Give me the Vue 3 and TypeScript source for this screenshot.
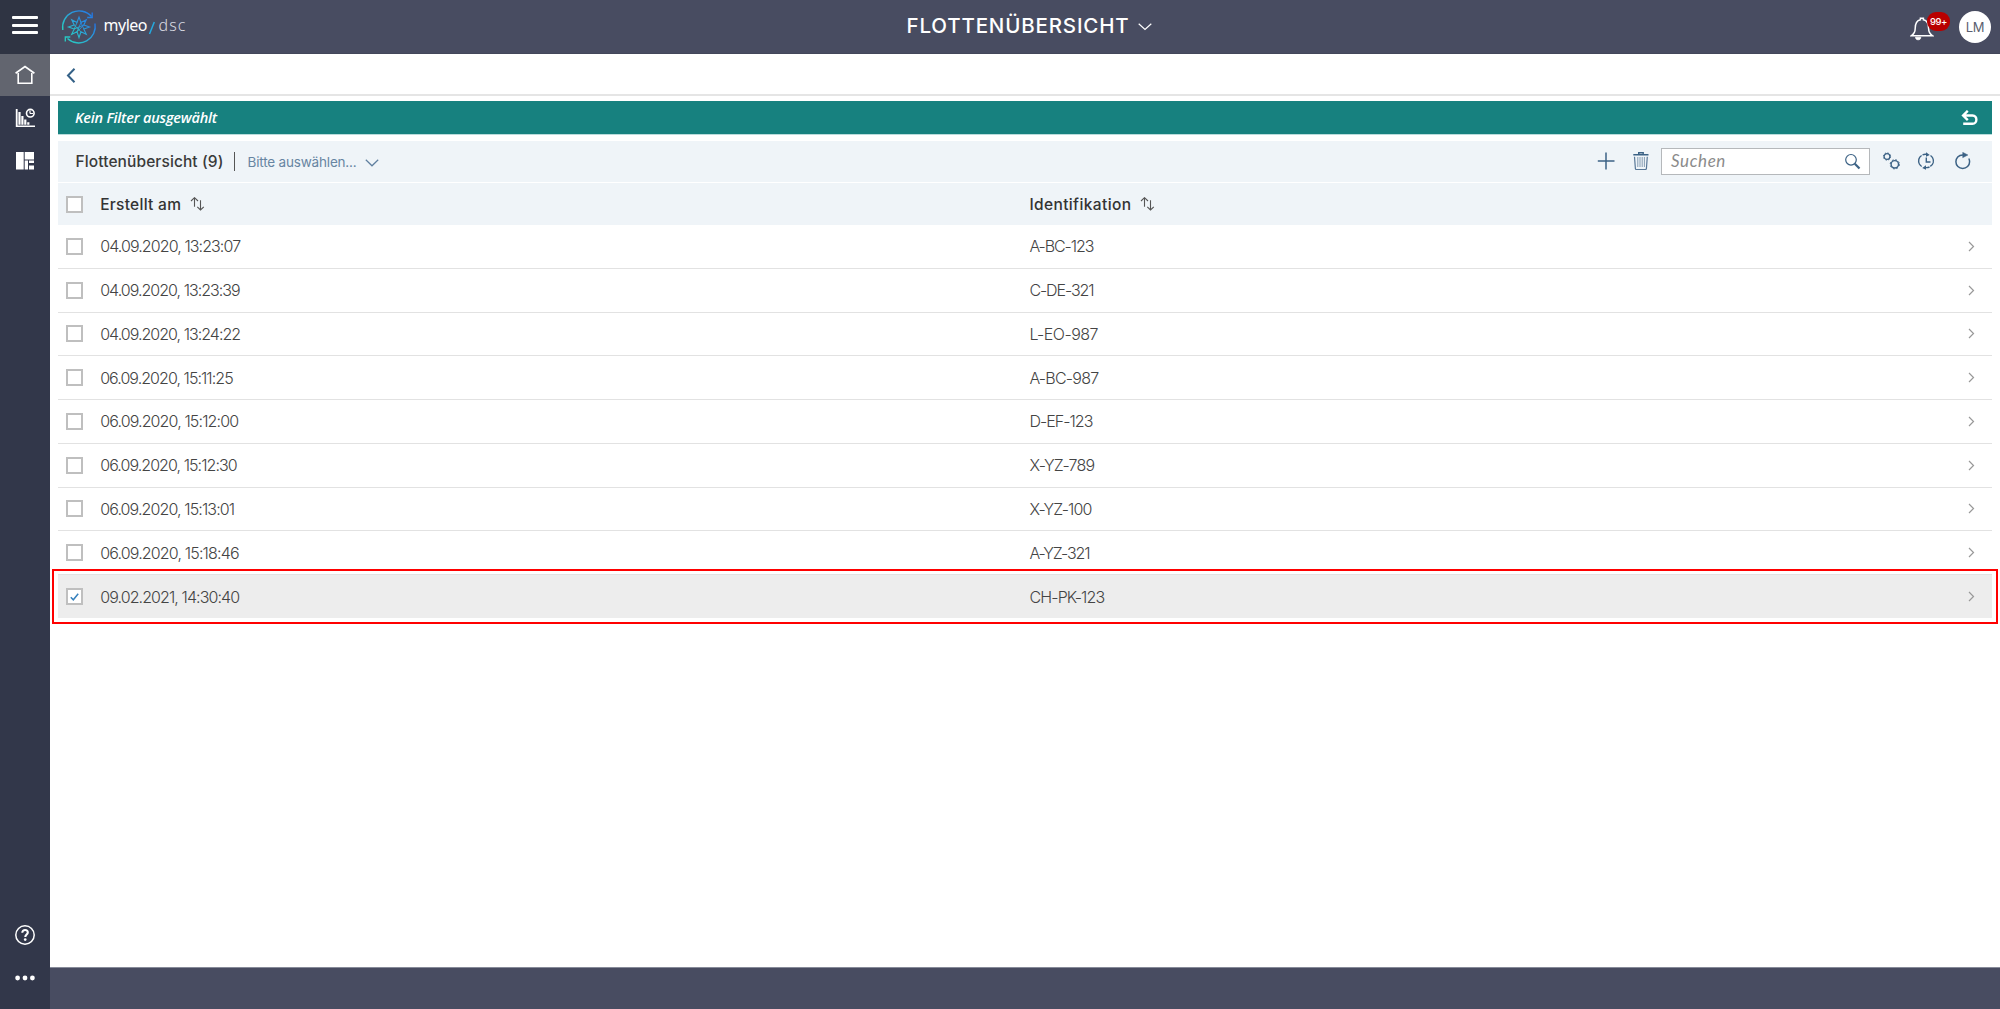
<script setup lang="ts">
import { ref, type Directive } from 'vue'

interface Vehicle {
  created: string
  createdWidth: number
  ident: string
  identWidth: number
  selected: boolean
}

const rows = ref<Vehicle[]>([
  { created: '04.09.2020, 13:23:07', createdWidth: 140, ident: 'A-BC-123', identWidth: 64, selected: false },
  { created: '04.09.2020, 13:23:39', createdWidth: 139.5, ident: 'C-DE-321', identWidth: 64, selected: false },
  { created: '04.09.2020, 13:24:22', createdWidth: 140, ident: 'L-EO-987', identWidth: 68, selected: false },
  { created: '06.09.2020, 15:11:25', createdWidth: 132.5, ident: 'A-BC-987', identWidth: 69, selected: false },
  { created: '06.09.2020, 15:12:00', createdWidth: 138, ident: 'D-EF-123', identWidth: 63, selected: false },
  { created: '06.09.2020, 15:12:30', createdWidth: 136.5, ident: 'X-YZ-789', identWidth: 65, selected: false },
  { created: '06.09.2020, 15:13:01', createdWidth: 134, ident: 'X-YZ-100', identWidth: 62, selected: false },
  { created: '06.09.2020, 15:18:46', createdWidth: 138.5, ident: 'A-YZ-321', identWidth: 60, selected: false },
  { created: '09.02.2021, 14:30:40', createdWidth: 139, ident: 'CH-PK-123', identWidth: 75, selected: true },
])

// Tracks a label so that it takes the given width in pixels.
const vFit: Directive<HTMLElement, number> = {
  mounted(el, binding) {
    const count = (el.textContent ?? '').length
    const spacing = (binding.value - el.getBoundingClientRect().width) / Math.max(1, count)
    el.style.letterSpacing = `${spacing}px`
  },
}
</script>

<template>
  <div class="app">
    <nav class="side">
      <button class="burger" aria-label="Menu"><i></i><i></i><i></i></button>
      <div class="nav-item active">
        <svg width="20" height="20" viewBox="0 0 20 20" fill="none" stroke="#fff">
          <path d="M.6 8.3 10 1.6l9.400 6.700" stroke-width="1.7" />
          <path d="M3.200 8v10.200h13.600V8" stroke-width="1.600" />
        </svg>
      </div>
      <div class="nav-item chart">
        <svg width="20" height="20" viewBox="0 0 20 20" fill="#fff">
          <path d="M.8 1h1.800v17.200H.8zM3.400 4h2.200v12.800H3.400zM6.300 8h2.200v8.800H6.300zM9.200 11.500h2.200v5.300H9.200zM12.200 14.300h2.200v2.500h-2.200zM.8 17.500H20v1.400H.8z" />
          <circle cx="15.300" cy="5.200" r="3.800" fill="none" stroke="#fff" stroke-width="1.600" />
          <path d="M15 5.500V2.500M15 5.500h3" stroke="#fff" stroke-width="1.200" />
        </svg>
      </div>
      <div class="nav-item tiles">
        <svg width="18" height="18" viewBox="0 0 18 18" fill="#fff">
          <path d="M0 0h7.700v17.500H0zM8.700 0H18v7.500H8.700zM8.700 8.500h3.300v9H8.700zM13 8.500h5v2.500h-5zM13 13.500h5v4h-5z" />
        </svg>
      </div>
      <div class="side-bottom">
        <svg class="help" width="22" height="22" viewBox="0 0 22 22">
          <circle cx="11" cy="11" r="9.200" fill="none" stroke="#fff" stroke-width="1.500" />
          <path d="M8.300 8.700C8.300 6.900 9.500 6 11 6s2.800.9 2.800 2.500c0 2-2.500 2.200-2.500 4.500" fill="none" stroke="#fff" stroke-width="2.100" />
          <circle cx="11.200" cy="15.600" r="1.350" fill="#fff" />
        </svg>
        <svg width="22" height="6" viewBox="0 0 22 6" fill="#fff">
          <circle cx="3.600" cy="3" r="2.400" /><circle cx="11" cy="3" r="2.400" /><circle cx="18.400" cy="3" r="2.400" />
        </svg>
      </div>
    </nav>

    <div class="main">
      <header class="top">
        <div class="brand">
          <svg width="36" height="36" viewBox="0 0 36 36" fill="none">
            <defs>
              <linearGradient id="brandTone" x1="0" y1="1" x2="1" y2="0">
                <stop offset="0" stop-color="#27d0c0" /><stop offset=".5" stop-color="#2ba5d8" /><stop offset="1" stop-color="#2374e6" />
              </linearGradient>
            </defs>
            <g stroke="url(#brandTone)">
              <path d="M1.800 21A16.500 16.500 0 0 1 30.500 7.500" stroke-width="1.400" />
              <path d="M34 14.500A16.500 16.500 0 0 1 6.500 29.500" stroke-width="1.400" />
              <path d="M31.200 3.500v5h-5M4.300 32.500v-4.500h5" stroke-width="1.300" />
              <path d="m18 8 2 5.500 5.300-2.800-2.500 5.300L28.500 18l-5.700 2 2.500 5.300-5.300-2.500L18 28.500l-2-5.700-5.300 2.500 2.500-5.300-5.700-2 5.700-2-2.500-5.300 5.300 2.800z" stroke-width="1.100" />
              <path d="m13.200 16 6.800 6.800M16 13.500l-2.800 6.500 9.600-4M16 22.800l4-9.300 2.800 6.500M22.800 16 16 22.800" stroke-width=".9" />
            </g>
          </svg>
          <span v-fit="43.500" class="brand-name">myleo</span>
          <svg class="slash" width="8" height="14" viewBox="0 0 8 14"><path d="M1.500 13 6.300 1" stroke="#25a9e0" stroke-width="1.500" /></svg>
          <span v-fit="28" class="brand-sub">dsc</span>
        </div>
        <div class="title">
          <span v-fit="223">FLOTTENÜBERSICHT</span>
          <svg width="14" height="8" viewBox="0 0 14 8"><path d="m.7.800 6.300 5.700L13.300.800" fill="none" stroke="#fff" stroke-width="1.200" /></svg>
        </div>
        <div class="user">
          <div class="bell">
            <svg width="24" height="25" viewBox="0 0 24 25" fill="none" stroke="#fff">
              <path d="M1.200 19.800C4 18 5.200 16 5.200 12.500c0-5 1.800-8 5.200-8.700V2.200h3v1.600c3.400.7 5.200 3.700 5.200 8.700 0 3.500 1.200 5.500 4 7.300z" stroke-width="1.500" />
              <path d="M5.500 21.200h5.300c0 1.600-.9 2.600-2.600 2.600s-2.700-1-2.700-2.600z" fill="#fff" stroke-width=".7" />
            </svg>
            <span class="badge"><span v-fit="17">99+</span></span>
          </div>
          <div class="avatar"><span v-fit="18.500">LM</span></div>
        </div>
      </header>

      <div class="backbar">
        <svg width="10" height="15" viewBox="0 0 10 15"><path d="M8.500.8 2 7.500l6.500 6.700" fill="none" stroke="#346187" stroke-width="2" /></svg>
      </div>

      <main class="content">
        <div class="filter">
          <span v-fit="142">Kein Filter ausgewählt</span>
          <svg width="17" height="16" viewBox="0 0 17 16" fill="none" stroke="#fff" stroke-width="2.400">
            <path d="M6.800.8 2.100 5.500l4.700 4.700M2 5.500h9.500c5.300 0 5 8.300 0 8.300H2.200" />
          </svg>
        </div>

        <div class="toolbar">
          <span v-fit="148" class="list-title">Flottenübersicht (9)</span>
          <i class="divider"></i>
          <span v-fit="109" class="variant">Bitte auswählen...</span>
          <svg class="variant-arrow" width="14" height="8" viewBox="0 0 14 8"><path d="m.8.8 6.200 6 6.200-6" fill="none" stroke="#5f7f9f" stroke-width="1.200" /></svg>
          <div class="actions">
            <svg class="plus" width="18" height="18" viewBox="0 0 18 18"><path d="M9 .5v17M.8 9h16.700" stroke="#3c6285" stroke-width="1.500" /></svg>
            <svg class="trash" width="18" height="18" viewBox="0 0 18 18" fill="none" stroke="#587797">
              <path d="M1.300 2.800h15.200M6.700 2.300V.8h4.500v1.500" stroke="#3c6285" stroke-width="1.400" />
              <path d="m2.500 4.700.9 12c.1.500.4.800.9.800h9.200c.5 0 .8-.3.900-.8l.9-12" stroke-width="1.200" />
              <path d="M5.800 5v10M8 5v10M10.200 5v10M12.400 5v10" stroke-width=".7" />
            </svg>
            <div class="search">
              <span v-fit="55">Suchen</span>
              <svg width="17" height="17" viewBox="0 0 17 17" fill="none" stroke="#3c6285">
                <circle cx="7" cy="6.800" r="5.300" stroke-width="1.200" /><path d="m10.800 10.700 4.700 4.800" stroke-width="2.200" />
              </svg>
            </div>
            <svg class="gears" width="18" height="18" viewBox="0 0 18 18" fill="none" stroke="#3c6285">
              <circle cx="5" cy="4.500" r="2.900" stroke-width="1.300" /><circle cx="5" cy="4.500" r="3.600" stroke-width="1" stroke-dasharray="1.400 1.430" />
              <circle cx="12.800" cy="12.300" r="3.700" stroke-width="1.400" /><circle cx="12.800" cy="12.300" r="4.600" stroke-width="1" stroke-dasharray="1.800 1.810" />
            </svg>
            <svg class="clock" width="18" height="18" viewBox="0 0 18 18" fill="none" stroke="#3c6285">
              <path d="M4.600 3.500C1.600 5.200.9 9 2.400 12c.6 1.100 1.300 1.900 2.300 2.500M13.300 14.400c3.100-2 3.800-5.600 2.400-8.400-.6-1.200-1.300-1.900-2.200-2.500M9.300 5.500V10h4.200M5.500 3c1.300-.7 2.500-.8 4-.6M12.500 15c-1.300.6-2.500.8-4 .6" stroke-width="1.400" />
              <path d="M9 .3v4.400l3.800-1.800zM9 13.300v4.400l-3.800-1.800z" fill="#3c6285" stroke="none" />
            </svg>
            <svg class="refresh" width="18" height="18" viewBox="0 0 18 18" fill="none" stroke="#3c6285">
              <path d="M10.500 3H8.700C4.500 3 1.900 6.200 1.900 9.700c0 3.800 3 6.700 6.800 6.700s6.900-2.900 6.900-6.700c0-1.200-.3-2.300-.8-3.200" stroke-width="1.500" />
              <path d="M8.700.3v5.400L14 3z" fill="#3c6285" stroke-width=".4" />
            </svg>
          </div>
        </div>

        <div class="row head">
          <i class="box"></i>
          <div class="cell first">
            <span v-fit="81">Erstellt am</span>
            <svg width="15" height="14" viewBox="0 0 15 14" fill="none" stroke="#555" stroke-width="1.100"><path d="M4.500 9.800V.8M1 4 4.500.7 8 4M10.500 3.200v9.700M7.300 9.800l3.200 3.200 3.300-3.200" /></svg>
          </div>
          <div class="cell">
            <span v-fit="102">Identifikation</span>
            <svg width="15" height="14" viewBox="0 0 15 14" fill="none" stroke="#555" stroke-width="1.100"><path d="M4.500 9.800V.8M1 4 4.500.7 8 4M10.500 3.200v9.700M7.300 9.800l3.200 3.200 3.300-3.200" /></svg>
          </div>
        </div>

        <div v-for="row in rows" :key="row.created" class="row item" :class="{ selected: row.selected }">
          <i class="box">
            <svg v-if="row.selected" width="9" height="8" viewBox="0 0 9 8"><path d="m.8 4.200 2.500 2.600L8.200.8" fill="none" stroke="#3681bd" stroke-width="1.500" /></svg>
          </i>
          <div class="cell first"><span v-fit="row.createdWidth">{{ row.created }}</span></div>
          <div class="cell"><span v-fit="row.identWidth">{{ row.ident }}</span></div>
          <svg class="go" width="7" height="11" viewBox="0 0 7 11"><path d="m1 1 4.500 4.500L1 10" fill="none" stroke="#999" stroke-width="1.200" /></svg>
        </div>
      </main>
      <footer class="bottom"></footer>
    </div>
  </div>
</template>

<style>
body { margin: 0; background: #fff; }
</style>

<style scoped>
.app { display: flex; width: 2000px; height: 1009px; overflow: hidden; font-family: Inter, "Open Sans", sans-serif; color: #3a3a3a; }
.app * { box-sizing: border-box; }
svg { display: block; flex: none; }
span { white-space: nowrap; }
.side { width: 50px; flex: none; display: flex; flex-direction: column; background: #32374a; }
.burger { height: 54px; padding: 16px 12px 0; border: 0; background: #2f3443; display: flex; flex-direction: column; gap: 4.500px; }
.burger i { flex: none; width: 26px; height: 3px; border-radius: 1px; background: #fff; }
.nav-item { height: 42px; display: flex; align-items: center; justify-content: center; }
.nav-item.active { background: #62656f; }
.nav-item.chart { height: 43px; }
.nav-item.tiles { height: 43px; }
.side-bottom { margin-top: auto; display: flex; flex-direction: column; align-items: center; gap: 28.500px; padding-bottom: 28.500px; }
.main { flex: 1; display: flex; flex-direction: column; min-width: 0; }
.top { height: 54px; flex: none; background: #484c61; display: grid; grid-template-columns: 1fr auto 1fr; color: #fff; border-bottom: 1px solid #43475a; }
.brand { display: flex; padding-left: 11px; padding-top: 9px; }
.brand-name, .brand-sub { font: 400 16px/20px "Noto Sans", "Open Sans", sans-serif; margin-left: 6.500px; margin-top: 6px; }
.brand-sub { font-weight: 300; color: #d8dae2; margin-left: 2.500px; }
.slash { margin: 12px 0 0 1px; }
.title { display: flex; font-size: 20.500px; line-height: 24px; font-weight: 500; padding-top: 14px; margin-left: 8px; }
.title svg { margin: 9px 0 0 8px; }
.user { display: flex; justify-content: flex-end; padding-right: 9px; }
.bell { position: relative; width: 24px; margin: 16px 25px 0 0; }
.badge { position: absolute; left: 17px; top: -4px; width: 23px; height: 19px; border-radius: 9px; background: #b90000; font-size: 9.500px; line-height: 19px; font-weight: 500; display: flex; justify-content: center; }
.avatar { width: 32px; height: 32px; margin-top: 11px; border-radius: 50%; background: #fff; color: #5b5f70; font-size: 13px; line-height: 32px; display: flex; justify-content: center; }
.backbar { height: 42px; flex: none; padding: 13.500px 0 0 16px; border-bottom: 2px solid #e5e5e5; }
.content { flex: 1; padding: 5px 8px 0 8px; min-height: 0; }
.filter { height: 34px; background: #17817f; border-bottom: 1px solid #b9dcdb; color: #fff; display: flex; justify-content: space-between; padding: 0 14px 0 17px; font: italic 600 14.500px/34px "Open Sans", sans-serif; }
.filter svg { margin-top: 9px; }
.toolbar { height: 41px; margin-top: 6px; background: #eff4f8; display: flex; align-items: center; padding-left: 17.500px; }
.list-title { font-size: 15.500px; font-weight: 500; }
.divider { width: 1.500px; height: 19px; background: #555; margin: 0 12.500px 0 10px; }
.variant { font-size: 13.500px; color: #6785a2; }
.variant-arrow { margin: 3px 0 0 8.500px; }
.actions { margin-left: auto; display: flex; align-items: center; padding-right: 20.500px; margin-top: -1px; }
.trash { margin: 0 11px 0 17px; }
.search { width: 209px; height: 27px; border: 1px solid #b5b8bb; background: #fff; display: flex; align-items: center; justify-content: space-between; padding: 0 8px 0 9px; font: italic 400 17px/24px Lato, sans-serif; color: #8b8b8b; }
.gears { margin: 0 17px 0 12px; }
.clock { margin-right: 18.500px; }
.row { display: flex; align-items: center; padding: 0 17.500px 0 8.400px; }
.head { height: 42px; margin-top: 1px; background: #eff4f8; font-size: 15.500px; font-weight: 500; color: #333; }
.box { width: 17px; height: 17px; flex: none; border: 2px solid #bfbfbf; background: #fff; display: flex; align-items: center; justify-content: center; }
.cell { display: flex; align-items: center; }
.cell.first { width: 946px; padding-left: 16.800px; flex: none; }
.head svg { margin-left: 9px; }
.item { height: 43.750px; border-bottom: 1px solid #e2e2e2; font-size: 16px; font-weight: 300; color: #444; }
.item.selected { height: 43px; border-bottom: 0; background: #ededed; }
.go { margin-left: auto; }
.selected { outline: 2px solid #f00; outline-offset: 4px; }
.bottom { height: 42px; flex: none; background: #484c61; border-top: 1px solid #878b99; }
</style>
